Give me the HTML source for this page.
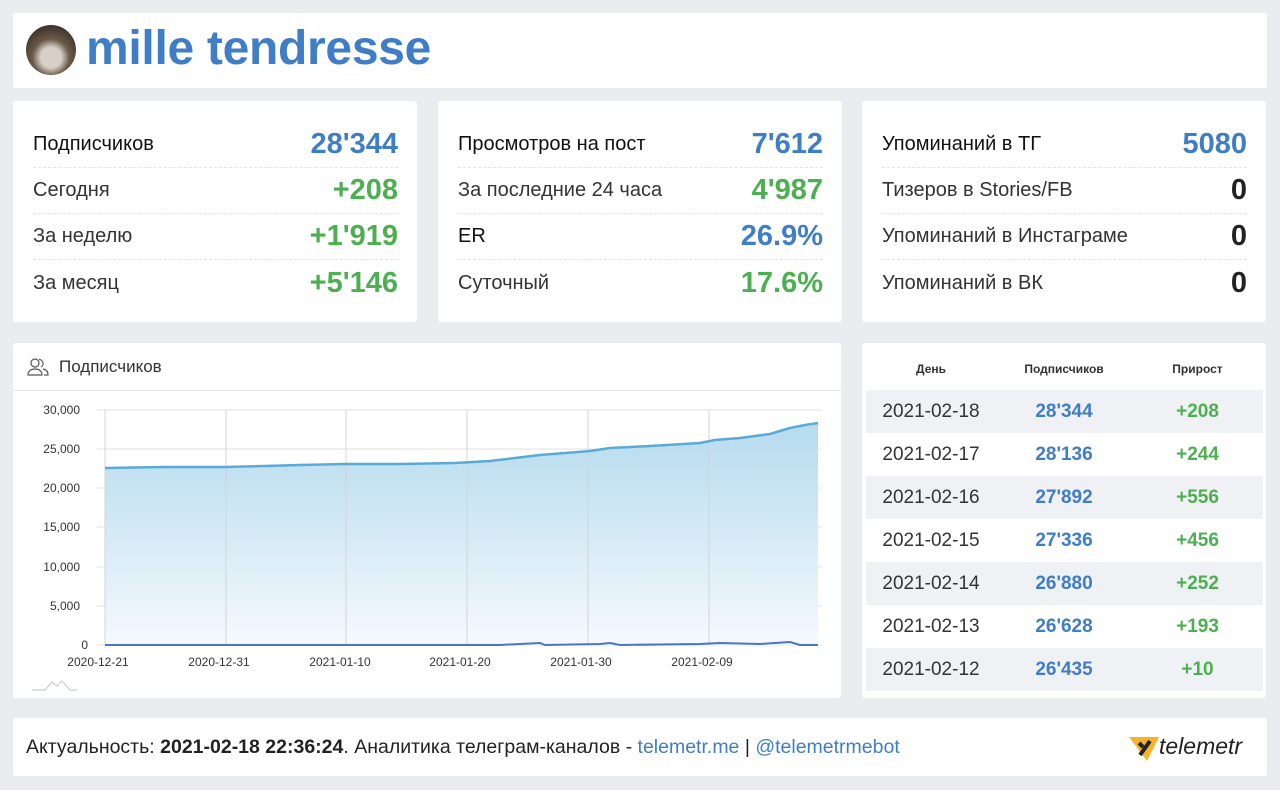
<!DOCTYPE html>
<html><head><meta charset="utf-8"><style>
*{margin:0;padding:0;box-sizing:border-box}
body{width:1280px;height:790px;background:#ebecf0;font-family:"Liberation Sans",Roboto,sans-serif;position:relative;overflow:hidden;color:#222}
.card{position:absolute;background:#fff;border-radius:3px}
.row{display:flex;justify-content:space-between;align-items:center;height:46px;border-bottom:1px dashed #e4e4e4;font-size:20px;color:#333}
.row:last-child{border-bottom:none}
.row b{font-size:29px;font-weight:bold}
.bl{color:#3f7ec6}.gr{color:#4caf50}.dk{color:#222}
.stat{padding:21px 19px 0 20px}
table{border-collapse:collapse;width:397px;position:absolute;left:4px;top:4px;table-layout:fixed}
td,th{text-align:center}
th{font-size:12px;font-weight:bold;color:#333;height:43px}
td{height:43px;font-size:19px}
tr.g td{background:#f0f1f4}
td:first-child{color:#333}
td.b{color:#3f7ec6;font-weight:bold}
td.c{color:#4caf50;font-weight:bold}
</style></head><body>
<div class="card" style="left:13px;top:13px;width:1254px;height:75px">
 <div style="position:absolute;left:13px;top:12px;width:50px;height:50px;border-radius:50%;background:radial-gradient(circle at 50% 65%,#d8d0c8 0 25%,#6a5a4a 45%,#3b3028 80%)"></div>
 <div style="position:absolute;left:73px;top:8px;font-size:48px;font-weight:bold;color:#3f7ec6;letter-spacing:-0.3px">mille tendresse</div>
</div>
<div class="card stat" style="left:13px;top:101px;width:404px;height:221px">
 <div class="row"><span style="color:#111">Подписчиков</span><b class="bl">28'344</b></div>
 <div class="row"><span>Сегодня</span><b class="gr">+208</b></div>
 <div class="row"><span>За неделю</span><b class="gr">+1'919</b></div>
 <div class="row"><span>За месяц</span><b class="gr">+5'146</b></div>
</div>
<div class="card stat" style="left:438px;top:101px;width:404px;height:221px">
 <div class="row"><span style="color:#111">Просмотров на пост</span><b class="bl">7'612</b></div>
 <div class="row"><span>За последние 24 часа</span><b class="gr">4'987</b></div>
 <div class="row"><span style="color:#111">ER</span><b class="bl">26.9%</b></div>
 <div class="row"><span>Суточный</span><b class="gr">17.6%</b></div>
</div>
<div class="card stat" style="left:862px;top:101px;width:404px;height:221px">
 <div class="row"><span style="color:#111">Упоминаний в ТГ</span><b class="bl">5080</b></div>
 <div class="row"><span>Тизеров в Stories/FB</span><b class="dk">0</b></div>
 <div class="row"><span>Упоминаний в Инстаграме</span><b class="dk">0</b></div>
 <div class="row"><span>Упоминаний в ВК</span><b class="dk">0</b></div>
</div>
<div class="card" style="left:13px;top:343px;width:828px;height:355px">
 <div style="height:48px;border-bottom:1px solid #e8e8e8;display:flex;align-items:center;padding-left:14px;font-size:17px;color:#333">
  <svg width="22" height="20" viewBox="0 0 22 20" fill="none" stroke="#555" stroke-width="1.2" style="margin-right:10px"><circle cx="8" cy="6" r="4"/><path d="M1 18c0-4 3-6 7-6s7 2 7 6z"/><path d="M12 2.5a4 4 0 0 1 2 7.5M16 12c3 .5 5 2.5 5 6h-4"/></svg>Подписчиков</div>
</div>
<svg style="position:absolute;left:0;top:0" width="842" height="700">
 <defs><linearGradient id="g" x1="0" y1="0" x2="0" y2="1"><stop offset="0" stop-color="#b5dbee"/><stop offset="1" stop-color="#f5f9fd"/></linearGradient></defs>
 <g stroke="#e0e0e0" stroke-width="1">
  <line x1="97" y1="410" x2="822" y2="410"/><line x1="97" y1="449" x2="822" y2="449"/><line x1="97" y1="488" x2="822" y2="488"/><line x1="97" y1="527" x2="822" y2="527"/><line x1="97" y1="567" x2="822" y2="567"/><line x1="97" y1="606" x2="822" y2="606"/><line x1="97" y1="645" x2="822" y2="645"/>
 </g>
 <path d="M105 468 L165 467 L225 467 L265 466 L300 465 L346 464 L400 464 L455 463 L490 461 L515 458 L540 455 L590 451 L610 448 L650 446 L700 443 L715 440 L740 438 L770 434 L790 428 L805 425 L818 423 L818 645 L105 645Z" fill="url(#g)"/>
 <g stroke="#d4d4d4"><line x1="105" y1="410" x2="105" y2="645"/><line x1="226" y1="410" x2="226" y2="645"/><line x1="346" y1="410" x2="346" y2="645"/><line x1="467" y1="410" x2="467" y2="645"/><line x1="588" y1="410" x2="588" y2="645"/><line x1="709" y1="410" x2="709" y2="645"/></g>
 <path d="M105 468 L165 467 L225 467 L265 466 L300 465 L346 464 L400 464 L455 463 L490 461 L515 458 L540 455 L590 451 L610 448 L650 446 L700 443 L715 440 L740 438 L770 434 L790 428 L805 425 L818 423" fill="none" stroke="#5aaad8" stroke-width="2.5"/>
 <path d="M105 645 L500 645 L520 644 L540 643 L545 645 L600 644 L610 643 L620 645 L700 644 L720 643 L760 644 L790 642 L800 645 L818 645" fill="none" stroke="#4a74c8" stroke-width="2"/>
 <g font-size="12" fill="#333" text-anchor="end"><text x="80" y="414">30,000</text><text x="80" y="453">25,000</text><text x="80" y="492">20,000</text><text x="80" y="531">15,000</text><text x="80" y="571">10,000</text><text x="80" y="610">5,000</text><text x="88" y="649">0</text></g>
 <g font-size="12" fill="#333" text-anchor="middle"><text x="98" y="666">2020-12-21</text><text x="219" y="666">2020-12-31</text><text x="340" y="666">2021-01-10</text><text x="460" y="666">2021-01-20</text><text x="581" y="666">2021-01-30</text><text x="702" y="666">2021-02-09</text></g>
 <path d="M32 690 L45 690 L52 682 L57 686 L62 681 L70 690 L77 690" fill="none" stroke="#ccc" stroke-width="1.2"/>
</svg>
<div class="card" style="left:862px;top:343px;width:404px;height:355px">
 <table>
  <colgroup><col style="width:130px"><col style="width:136px"><col style="width:131px"></colgroup>
  <tr><th>День</th><th>Подписчиков</th><th>Прирост</th></tr>
  <tr class="g"><td>2021-02-18</td><td class="b">28'344</td><td class="c">+208</td></tr>
  <tr><td>2021-02-17</td><td class="b">28'136</td><td class="c">+244</td></tr>
  <tr class="g"><td>2021-02-16</td><td class="b">27'892</td><td class="c">+556</td></tr>
  <tr><td>2021-02-15</td><td class="b">27'336</td><td class="c">+456</td></tr>
  <tr class="g"><td>2021-02-14</td><td class="b">26'880</td><td class="c">+252</td></tr>
  <tr><td>2021-02-13</td><td class="b">26'628</td><td class="c">+193</td></tr>
  <tr class="g"><td>2021-02-12</td><td class="b">26'435</td><td class="c">+10</td></tr>
 </table>
</div>
<div class="card" style="left:13px;top:718px;width:1254px;height:58px">
 <div style="position:absolute;left:13px;top:18px;font-size:19.5px;color:#222">Актуальность: <b>2021-02-18 22:36:24</b>. Аналитика телеграм-каналов - <span class="bl">telemetr.me</span> | <span class="bl">@telemetrmebot</span></div>
 <svg style="position:absolute;left:1116px;top:17px" width="32" height="28" viewBox="0 0 32 28"><path d="M0 2 L30 2 L18 26 Z" fill="#f5b52a"/><g stroke="#222" stroke-width="4"><line x1="10" y1="8" x2="14" y2="12"/><line x1="21" y1="6" x2="11" y2="20"/></g></svg>
 <div style="position:absolute;left:1146px;top:15px;font-size:23px;font-style:italic;color:#222">telemetr</div>
</div>
</body></html>
